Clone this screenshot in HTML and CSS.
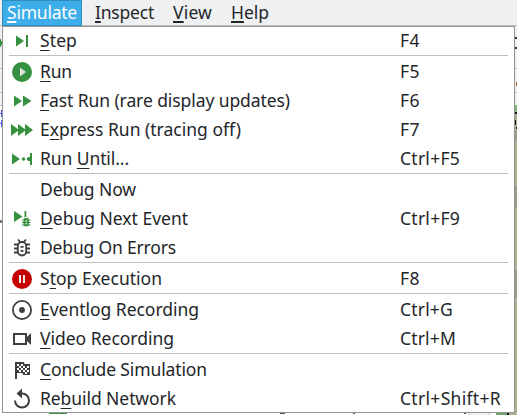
FILE: index.html
```html
<!DOCTYPE html>
<html lang="en">
<head>
<meta charset="utf-8">
<title>Simulate menu</title>
<link rel="stylesheet" href="styles.css">
</head>
<body>
<svg class="backdrop" width="517" height="415" viewBox="0 0 517 415" shape-rendering="crispEdges">
  <path fill="#eff0f1" d="M0 0h517v415H0z"/>
  <path fill="#bcbec0" d="M0 25h517v1H0zM0 68h517v1H0zM0 92h517v1H0zM0 105h2v1H0z"/>
  <path fill="#fff" d="M0 106h2v307H0z"/>
  <path fill="#36913f" d="M0 39h1v8H0zM1 41h1v4H1z"/>
  <path fill="#a9eef2" d="M0 78h1v1H0zM0 85h1v1H0z"/>
  <path fill="#5b5bea" d="M1 110h1v7H1zM0 113h2v1H0zM1 120h1v7H1zM0 123h2v1H0z"/>
  <path fill="#777" d="M0 220h2v3H0z"/>
  <path fill="#333639" d="M515 37h2v2h-2zM515 47h2v2h-2z"/>
  <path fill="#b5551e" d="M516 82h1v4h-1z"/>
  <path fill="#acb48f" d="M515 105h2v308h-2z"/>
  <path fill="#84b77d" d="M515 105h2v7h-2z"/>
  <path fill="#151515" d="M515 112h2v2h-2zM515 120h1v5h-1zM516 127h1v2h-1z"/>
  <path fill="#989c8d" d="M515 131h2v10h-2zM515 186h2v22h-2zM515 270h2v28h-2z"/>
  <path fill="#fff" d="M0 413h468v2H0z"/>
  <path fill="#36913f" d="M49 413h18v1H49z"/>
  <path fill="#555" d="M280 413h5v1h-5zM353 413h2v1h-2zM464 413h2v1h-2z"/>
  <path fill="#bfc1c3" d="M468 413h1v2h-1zM489 413h1v2h-1z"/>
  <path fill="#fff" d="M490 413h6v2h-6z"/>
  <path fill="#6faa6b" d="M496 413h12v2h-12z"/>
  <path fill="#111" d="M507 413h2v2h-2z"/>
  <path fill="#acb48f" d="M509 413h8v2h-8z"/>
</svg>
<nav class="menubar">
  <span class="tab active"><span class="fit" data-width="70"><u>S</u>imulate</span></span>
  <span class="tab"><span class="fit" data-width="59"><u>I</u>nspect</span></span>
  <span class="tab"><span class="fit" data-width="39"><u>V</u>iew</span></span>
  <span class="tab"><span class="fit" data-width="38"><u>H</u>elp</span></span>
</nav>
<div class="menu">
  <div class="item"><svg class="icon green"><path d="M5 6.500l8 5.500-8 5.500zM15 6h2v12h-2z"/></svg><span class="label"><span class="fit" data-width="37"><u>S</u>tep</span></span><span class="key"><span class="fit" data-width="20">F4</span></span></div>
  <hr>
  <div class="item"><svg class="icon green"><circle cx="11" cy="12" r="10"/><path fill="#e3e3e3" d="M9 7.500l6 4.500-6 4.500z"/></svg><span class="label"><span class="fit" data-width="32"><u>R</u>un</span></span><span class="key"><span class="fit" data-width="20">F5</span></span></div>
  <div class="item"><svg class="icon green"><path d="M3 6.500l8 5.500-8 5.500zM12 6.500l8.500 5.500-8.500 5.500z"/></svg><span class="label"><span class="fit" data-width="250"><u>F</u>ast Run (rare display updates)</span></span><span class="key"><span class="fit" data-width="20">F6</span></span></div>
  <div class="item"><svg class="icon green"><path d="M0 6l8 6-8 6zM7 6l8 6-8 6zM14 6l8 6-8 6z"/></svg><span class="label"><span class="fit" data-width="201">E<u>x</u>press Run (tracing off)</span></span><span class="key"><span class="fit" data-width="20">F7</span></span></div>
  <div class="item"><svg class="icon green"><path d="M1 6.500l8 5.500-8 5.500zM19 6h2v12h-2v-4h-2v-4h2z"/><circle cx="12.500" cy="12" r="1.700"/><circle cx="17.500" cy="12" r="1.800"/></svg><span class="label"><span class="fit" data-width="89">Run <u>U</u>ntil...</span></span><span class="key"><span class="fit" data-width="60">Ctrl+F5</span></span></div>
  <hr>
  <div class="item"><svg class="icon"></svg><span class="label"><span class="fit" data-width="96">Debug Now</span></span></div>
  <div class="item"><svg class="icon green"><path d="M3 4l8.500 5.500L3 15zM13.500 4h1.800v6h-1.800z"/><rect x="12.500" y="11" width="5.500" height="8.500" rx="2.700"/><path fill="none" stroke="#36913f" d="M11 13h8.500M11 15.500h8.500M11 18h8.500M13 10.500l1.500 1.500M17.500 10.500l-1.500 1.500"/><path fill="#fff" d="M14.300 13.500h2v1h-2zM14.300 16.200h2v1h-2z"/></svg><span class="label"><span class="fit" data-width="148"><u>D</u>ebug Next Event</span></span><span class="key"><span class="fit" data-width="60">Ctrl+F9</span></span></div>
  <div class="item"><svg class="icon"><g fill="none" stroke="#3e3e3e" stroke-width="1.800"><rect x="6.800" y="6" width="8.400" height="13.500" rx="4.200"/><path d="M3 8.500h4M15 8.500h4M3 12.500h4M15 12.500h4M3 16.500h4M15 16.500h4M7 3.500l2.500 2.800M15 3.500l-2.500 2.800M9.500 10.800h3M9.500 14.800h3"/></g></svg><span class="label"><span class="fit" data-width="136">Debug On Errors</span></span></div>
  <hr>
  <div class="item"><svg class="icon"><circle cx="11" cy="12" r="10" fill="#c40000"/><path fill="#e8e8e8" d="M8 8h2v8H8zM12 8h2v8h-2z"/></svg><span class="label"><span class="fit" data-width="122">S<u>t</u>op Execution</span></span><span class="key"><span class="fit" data-width="20">F8</span></span></div>
  <hr>
  <div class="item"><svg class="icon"><circle cx="11" cy="12" r="9.100" fill="none" stroke="#3e3e3e" stroke-width="1.800"/><circle cx="11" cy="12" r="2.900" fill="#3e3e3e"/></svg><span class="label"><span class="fit" data-width="159"><u>E</u>ventlog Recording</span></span><span class="key"><span class="fit" data-width="53">Ctrl+G</span></span></div>
  <div class="item"><svg class="icon"><path fill="none" stroke="#3e3e3e" stroke-width="2" d="M3 7h12v10H3z"/><path fill="#3e3e3e" d="M15 11L20 6v12l-5-5z"/></svg><span class="label"><span class="fit" data-width="134"><u>V</u>ideo Recording</span></span><span class="key"><span class="fit" data-width="56">Ctrl+M</span></span></div>
  <hr>
  <div class="item"><svg class="icon"><path fill="#3e3e3e" d="M4 4h9l.5 2H19v11h-7l-.5-2H6v6H4z"/><path fill="#fff" d="M6 6h2v2H6zM10 6h2v2h-2zM8 8h2v2H8zM12 8h2v2h-2zM16 8h2v2h-2zM6 10h2v2H6zM10 10h2v2h-2zM14 10h2v2h-2zM8 12h2v2H8zM12 12h2v2h-2zM16 12h2v2h-2zM14 14h2v2h-2z"/></svg><span class="label"><span class="fit" data-width="167"><u>C</u>onclude Simulation</span></span></div>
  <div class="item"><svg class="icon"><path fill="none" stroke="#3e3e3e" stroke-width="2" d="M4 13.500a7 7 0 1 0 7-7H9"/><path fill="#3e3e3e" d="M11 1.500v10L5.500 6.500z"/></svg><span class="label"><span class="fit" data-width="136">Re<u>b</u>uild Network</span></span><span class="key"><span class="fit" data-width="101">Ctrl+Shift+R</span></span></div>
</div>
<script src="fit.js"></script>
</body>
</html>
```
FILE: styles.css
```css
* { box-sizing: border-box; }
body {
  margin: 0;
  width: 517px;
  height: 415px;
  overflow: hidden;
  font-family: "Noto Sans", sans-serif;
  font-size: 17.5px;
  color: #232629;
}
.backdrop { position: absolute; left: 0; top: 0; z-index: -1; }
.menubar { display: flex; height: 26px; padding-left: 2px; }
.tab {
  height: 26px;
  line-height: 23px;
  padding: 0 4px;
  margin-right: 9px;
  border: 1px solid transparent;
}
.tab.active { background: #3daee9; border-color: #2f8cbd; color: #fcfcfc; margin-right: 8px; }
.tab u { text-decoration-thickness: 2px; text-underline-offset: 2px; }
u { text-decoration-thickness: 1px; text-underline-offset: 3px; text-decoration-skip-ink: none; }
.menu {
  margin-left: 2px;
  width: 513px;
  height: 387px;
  background: #fff;
  outline: 1px solid #929496;
  outline-offset: -1px;
}
.item { display: flex; height: 29px; padding-left: 9px; line-height: 29px; }
.icon { flex: none; width: 23px; height: 23px; margin-top: 3px; }
.green { fill: #36913f; }
.label { width: 360px; margin-left: 6px; }
.fit { display: inline-block; white-space: nowrap; }
hr { height: 2px; margin: 0 7px; border: 0; border-top: 1px solid #bcbebf; }
```
FILE: fit.js
```js
// Tracks each label so that it fills its nominal width.
document.querySelectorAll('.fit').forEach(function (el) {
  var target = Number(el.dataset.width);
  var natural = el.getBoundingClientRect().width;
  el.style.letterSpacing = (target - natural) / el.textContent.length + 'px';
});
```
